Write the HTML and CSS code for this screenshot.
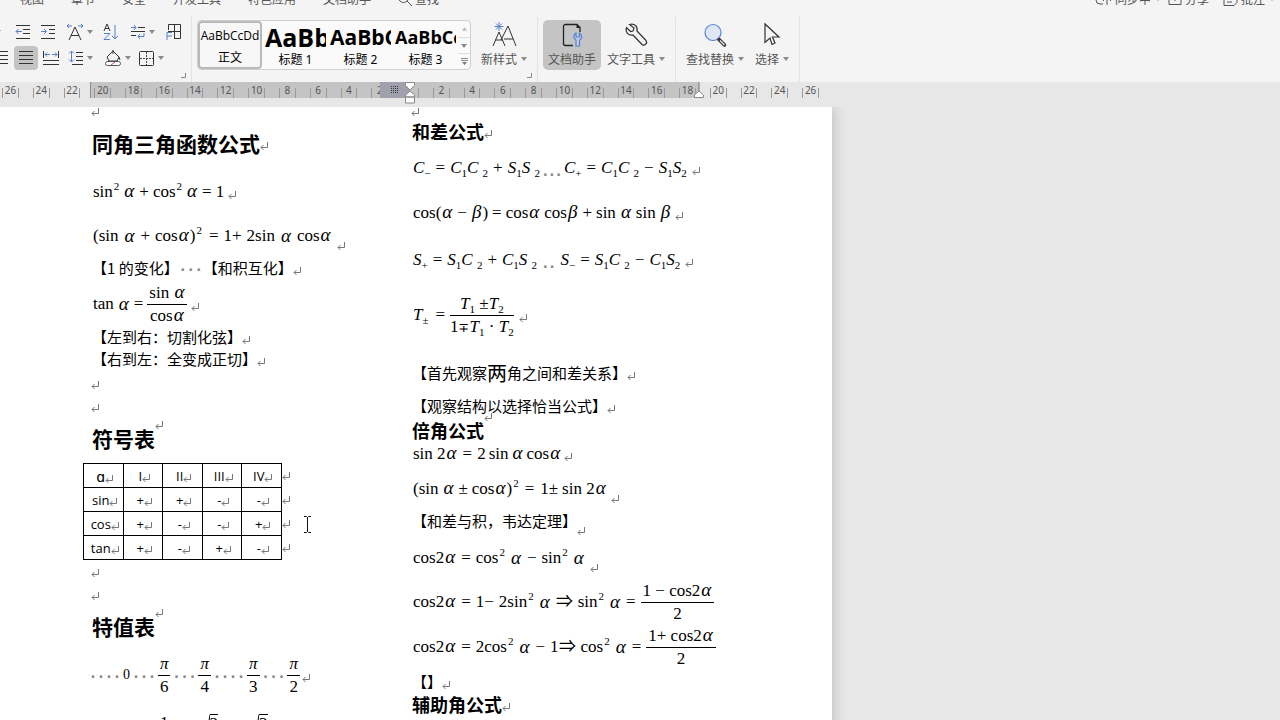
FILE: index.html
```html
<!DOCTYPE html>
<html lang="zh-CN">
<head>
<meta charset="utf-8">
<title>三角函数公式</title>
<link rel="stylesheet" href="styles.css">
</head>
<body>
<svg class="defs" aria-hidden="true">
  <symbol id="ret" viewBox="0 0 8 8"><path d="M7.5 0v5.500H1M3.500 3L1 5.500 3.500 8" fill="none" stroke="#777"/></symbol>
  <symbol id="tri" viewBox="0 0 6 4"><path d="M0 0h6L3 4z" fill="#8a8a8a"/></symbol>
</svg>
<div class="app">
  <nav class="menu">
    <button>视图</button><button>章节</button><button>安全</button><button>开发工具</button><button>特色应用</button><button>文档助手</button>
    <button class="find"><svg width="14" height="14" viewBox="0 0 14 14"><circle cx="5.500" cy="5.500" r="5"/><path d="M9 9l5 5"/></svg>查找</button>
    <div class="menu-right">
      <button class="sync"><svg width="17" height="12" viewBox="0 0 17 12"><path d="M8 11H5a4 4 0 010-8M12 1v11M8 8l4-4 4 4"/></svg>同步中<svg class="dot" width="6" height="4"><use href="#tri"/></svg></button>
      <button><svg width="14" height="12" viewBox="0 0 14 12"><path d="M1 2v9.500h12V2M7 8V0"/></svg>分享</button>
      <button><svg width="15" height="13" viewBox="0 0 15 13"><path d="M1 0v12.500h10l3-3V0M4 6h7M4 9h5"/></svg>批注<svg class="dot" width="6" height="4"><use href="#tri"/></svg></button>
    </div>
  </nav>

  <div class="ribbon">
    <section class="group para">
      <div class="tools first">
        <button aria-label="编号"><svg width="6" height="4"><use href="#tri"/></svg></button>
        <button aria-label="减少缩进"><svg width="16" height="16" viewBox="0 0 16 16"><path class="k" d="M1 1.500h14M8 5.500h7M8 9.500h7M1 14.500h14"/><path class="b" d="M7 7.500H1M3.500 5L1 7.500 3.500 10"/></svg></button>
        <button aria-label="增加缩进"><svg width="16" height="16" viewBox="0 0 16 16"><path class="k" d="M1 1.500h14M9 5.500h6M9 9.500h6M1 14.500h14"/><path class="b" d="M1 7.500h5M4 5l2.500 2.500L4 10"/></svg></button>
        <button class="wide" aria-label="字符缩放"><svg width="18" height="18" viewBox="0 0 18 18"><path class="k" d="M3 17L9 4l6 13M5 12.500h8"/><path class="b" d="M1 3h5M3 1L1 3l2 2M12 3h5M15 1l2 2-2 2"/></svg><svg width="6" height="4"><use href="#tri"/></svg></button>
        <button aria-label="排序"><svg width="18" height="18" viewBox="0 0 18 18"><path class="k" d="M2 8l3-7 3 7M3 5.500h4"/><path class="b" d="M2 10.500h6L2 16.500h6M13 2v14M10 13l3 3 3-3"/></svg></button>
        <button class="wide" aria-label="制表位"><svg width="16" height="16" viewBox="0 0 16 16"><path class="k" d="M8 3.500h7M1 7.500h14M1 11.500h5"/><path class="b" d="M1 3.500h5M4 1l2 2.500L4 6M14 9v3.500H8M10 10l-2 2.500 2 2.500"/></svg><svg width="6" height="4"><use href="#tri"/></svg></button>
        <button aria-label="框架"><svg width="18" height="18" viewBox="0 0 18 18"><path class="k" d="M3.500 7V1.500h12v14H9M9.500 2v14M3 8.500h13"/><path class="b" d="M2 17V9.500h5M2 13h5"/></svg></button>
      </div>
      <div class="tools second">
        <button aria-label="右对齐"><svg width="16" height="16" viewBox="0 0 16 16"><path class="k" d="M1 1.500h14M5 5.500h10M1 9.500h14M5 13.500h10"/></svg></button>
        <button class="on" aria-label="两端对齐"><svg width="16" height="16" viewBox="0 0 16 16"><path class="k" d="M1 1.500h14M1 5.500h14M1 9.500h14M1 13.500h14"/></svg></button>
        <button aria-label="分散对齐"><svg width="18" height="16" viewBox="0 0 18 16"><path class="k" d="M1.500 1v7M16.500 1v7M1 10.500h16M1 14.500h16"/><path class="b" d="M3 4.500h5M5 2.500l-2 2 2 2M10 4.500h5M13 2.500l2 2-2 2"/></svg></button>
        <button class="wide" aria-label="行距"><svg width="16" height="16" viewBox="0 0 16 16"><path class="k" d="M8 2.500h7M8 6.500h7M8 10.500h7M4 14.500h11"/><path class="b" d="M3.500 1v11M1 3.500L3.500 1 6 3.500M1 9.500L3.500 12 6 9.500"/></svg><svg width="6" height="4"><use href="#tri"/></svg></button>
        <button class="wide fill" aria-label="底纹"><svg width="18" height="18" viewBox="0 0 18 18"><path class="k" d="M3 8l6-6 6 6-2 4H5zM9 1v4M15 8l1 3"/><rect x="1.500" y="12.500" width="15" height="4" rx="2" fill="#fff" stroke="#555"/><path d="M7 16l4-3" stroke="#d44a5a"/></svg><svg width="6" height="4"><use href="#tri"/></svg></button>
        <button class="wide" aria-label="边框"><svg width="17" height="17" viewBox="0 0 17 17"><rect class="k" x="1.500" y="1.500" width="14" height="14" rx="1"/><path d="M8.500 2v13M2 8.500h13" stroke="#444" stroke-dasharray="2 1"/></svg><svg width="6" height="4"><use href="#tri"/></svg></button>
      </div>
      <svg class="launch" width="5" height="5"><path d="M4.500 0v4.500H0" fill="none" stroke="#888"/></svg>
    </section>

    <section class="group styles">
      <div class="gallery">
        <button class="style on"><span class="s0">AaBbCcDd</span><b>正文</b></button>
        <button class="style"><span class="s1">AaBb</span><b>标题 1</b></button>
        <button class="style"><span class="s2">AaBbC</span><b>标题 2</b></button>
        <button class="style"><span class="s3">AaBbCc</span><b>标题 3</b></button>
        <div class="spin">
          <button aria-label="上"><svg class="up" width="5" height="4" viewBox="0 0 6 4"><path d="M0 4h6L3 0z" fill="#bbb"/></svg></button>
          <button aria-label="下"><svg width="6" height="4"><use href="#tri"/></svg></button>
          <button aria-label="更多"><svg width="7" height="8" viewBox="0 0 7 8"><path d="M0 .5h7M0 2.500h7" stroke="#888"/><path d="M1 4h5L3.500 7z" fill="#777"/></svg></button>
        </div>
      </div>
      <button class="big new"><svg width="26" height="26" viewBox="0 0 26 26"><path class="k" d="M2 24l6-14 6 14M4 18h8M10 18l7-14 8 20M13 17h9"/><path class="b" d="M8 0v9M3.500 4.500h9M5 1.500l6 6M11 1.500l-6 6"/></svg><span>新样式<svg width="6" height="4"><use href="#tri"/></svg></span></button>
      <svg class="launch" width="5" height="5"><path d="M4.500 0v4.500H0" fill="none" stroke="#888"/></svg>
    </section>

    <section class="group mid">
      <button class="big on"><svg width="26" height="26" viewBox="0 0 26 26"><path d="M14 23.500H6.500a2 2 0 01-2-2v-17a2 2 0 012-2H18l3 3V10" fill="none" stroke="#222" stroke-width="1.300"/><path d="M17.500 2v4h4z" fill="#222"/><path class="b w" d="M17 11v4h3.500v-4c3 2 3 5.500 0 7v6H17v-6c-3-1.500-3-5 0-7z"/></svg><span>文档助手</span></button>
      <button class="big"><svg width="26" height="26" viewBox="0 0 26 26"><path class="k w" d="M6.500 2.500c5-1.500 8.500 2 7.500 6.500l9 9.500c2 2.500-1.500 6-4 4L10 13C5.500 14 2 10 3.500 5.500l4 4 2.500-.500 1-3z"/></svg><span>文字工具<svg width="6" height="4"><use href="#tri"/></svg></span></button>
    </section>
    <section class="group last">
      <button class="big"><svg width="26" height="26" viewBox="0 0 26 26"><circle cx="11" cy="10.500" r="8" fill="#dfe6f6" stroke="#5b84d6" stroke-width="1.200"/><path d="M17 17.500l5.500 5.500" stroke="#333" stroke-width="3.500" stroke-linecap="round"/><path d="M18 18.500l4.500 4.500" stroke="#eee" stroke-width="1.300"/></svg><span>查找替换<svg width="6" height="4"><use href="#tri"/></svg></span></button>
      <button class="big"><svg width="26" height="26" viewBox="0 0 26 26"><path class="k w" d="M6 2v18.500l5-4.500 2 6.500 3-1.500-2.500-6H20z"/></svg><span>选择<svg width="6" height="4"><use href="#tri"/></svg></span></button>
    </section>
  </div>

  <div class="ruler">
    <div class="scale">
      <span>26</span><span>24</span><span>22</span><span>20</span><span>18</span><span>16</span><span>14</span><span>12</span><span>10</span><span>8</span><span>6</span><span>4</span><span>2</span><span></span><span>2</span><span>4</span><span>6</span><span>8</span><span>10</span><span>12</span><span>14</span><span>16</span><span>18</span><span>20</span><span>22</span><span>24</span><span>26</span>
    </div>
    <div class="gutter"><svg width="8" height="8" viewBox="0 0 8 8"><path d="M0 .5h8M0 2.500h8M0 4.500h8M0 6.500h8" stroke="#333" stroke-dasharray="1 1"/></svg></div>
    <svg class="marker indent" width="10" height="22" viewBox="0 0 10 22"><path d="M.5.500h9v3L5 8 .5 3.500zM5 9l4.500 4v2h-9v-2zM.500 15h9v6h-9z" fill="#fff" stroke="#888"/></svg>
    <svg class="marker right" width="10" height="16" viewBox="0 0 10 16"><path d="M5 0v9" stroke="#777"/><path d="M5 9l4.500 4v2.500h-9V13z" fill="#fff" stroke="#888"/></svg>
  </div>

  <main class="desk">
    <article class="page">
      <div class="col left">
        <p class="h11 mark"><svg><use href="#ret"/></svg></p>
        <h1 class="h52">同角三角函数公式<svg><use href="#ret"/></svg></h1>
        <p class="eq h43"><span>sin<sup>2</sup></span><i class="g">α</i><span>+</span><span>cos<sup>2</sup></span><i class="g">α</i><span>=</span><span>1</span><svg><use href="#ret"/></svg></p>
        <p class="eq wide h46 low"><span>(sin</span><i class="g">α</i><span>+</span><span>cos<i class="g">α</i>)<sup>2</sup></span><span class="l">=</span><span>1+</span><span>2sin</span><i class="g">α</i><span>cos<i class="g">α</i></span><svg><use href="#ret"/></svg></p>
        <p class="h20">【1 的变化】<em>···</em>【和积互化】<svg><use href="#ret"/></svg></p>
        <p class="eq h48"><span>tan</span><i class="g">α</i><span>=</span><span class="frac"><span>sin <i class="g">α</i></span><span>cos<i class="g">α</i></span></span><svg><use href="#ret"/></svg></p>
        <p class="h20">【左到右：切割化弦】<svg><use href="#ret"/></svg></p>
        <p class="h24">【右到左：全变成正切】<svg><use href="#ret"/></svg></p>
        <p class="h24 mark"><svg><use href="#ret"/></svg></p>
        <p class="h24 mark"><svg><use href="#ret"/></svg></p>
        <h1 class="h43 high">符号表<svg><use href="#ret"/></svg></h1>
        <table>
          <tr><td class="var">ɑ<svg><use href="#ret"/></svg></td><td>I<svg><use href="#ret"/></svg></td><td>II<svg><use href="#ret"/></svg></td><td>III<svg><use href="#ret"/></svg></td><td>IV<svg><use href="#ret"/></svg></td><td class="end"><svg><use href="#ret"/></svg></td></tr>
          <tr><td>sin<svg><use href="#ret"/></svg></td><td>+<svg><use href="#ret"/></svg></td><td>+<svg><use href="#ret"/></svg></td><td>-<svg><use href="#ret"/></svg></td><td>-<svg><use href="#ret"/></svg></td><td class="end"><svg><use href="#ret"/></svg></td></tr>
          <tr><td>cos<svg><use href="#ret"/></svg></td><td>+<svg><use href="#ret"/></svg></td><td>-<svg><use href="#ret"/></svg></td><td>-<svg><use href="#ret"/></svg></td><td>+<svg><use href="#ret"/></svg></td><td class="end"><svg><use href="#ret"/></svg></td></tr>
          <tr><td>tan<svg><use href="#ret"/></svg></td><td>+<svg><use href="#ret"/></svg></td><td>-<svg><use href="#ret"/></svg></td><td>+<svg><use href="#ret"/></svg></td><td>-<svg><use href="#ret"/></svg></td><td class="end"><svg><use href="#ret"/></svg></td></tr>
        </table>
        <p class="h24 mark"><svg><use href="#ret"/></svg></p>
        <p class="h24 mark"><svg><use href="#ret"/></svg></p>
        <h1 class="h43 high">特值表<svg><use href="#ret"/></svg></h1>
        <p class="eq h52 values"><em>····</em><b>0</b><em>···</em><span class="frac"><i>π</i><span>6</span></span><em>···</em><span class="frac"><i>π</i><span>4</span></span><em>····</em><span class="frac"><i>π</i><span>3</span></span><em>···</em><span class="frac"><i>π</i><span>2</span></span><svg><use href="#ret"/></svg></p>
        <p class="eq h43 roots"><span>1</span><span class="root"><svg viewBox="0 0 6 18"><path d="M0 12l2-1 1.500 6L6 .5" stroke="#000"/></svg><span>2</span></span><span class="root"><svg viewBox="0 0 6 18"><path d="M0 12l2-1 1.500 6L6 .5" stroke="#000"/></svg><span>3</span></span></p>
      </div>

      <div class="col">
        <p class="h11 mark"><svg><use href="#ret"/></svg></p>
        <h2 class="h28">和差公式<svg><use href="#ret"/></svg></h2>
        <p class="eq wide h43"><span><i>C</i><sub>−</sub></span><span>=</span><span><i>C</i><sub>1</sub><i>C</i> <sub>2</sub></span><span>+</span><span><i>S</i><sub>1</sub><i>S</i> <sub>2</sub></span><em class="base dots3">...</em><span><i>C</i><sub>+</sub></span><span>=</span><span><i>C</i><sub>1</sub><i>C</i> <sub>2</sub></span><span>−</span><span><i>S</i><sub>1</sub><i>S</i><sub>2</sub></span><svg><use href="#ret"/></svg></p>
        <p class="eq h47"><span>cos(<i class="g">α</i></span><span>−</span><span><i class="g">β</i>)</span><span>=</span><span>cos<i class="g">α</i></span><span>cos<i class="g">β</i></span><span>+</span><span>sin</span><i class="g">α</i><span>sin</span><i class="g">β</i><svg><use href="#ret"/></svg></p>
        <p class="eq wide h47"><span><i>S</i><sub>+</sub></span><span>=</span><span><i>S</i><sub>1</sub><i>C</i> <sub>2</sub></span><span>+</span><span><i>C</i><sub>1</sub><i>S</i> <sub>2</sub></span><em class="base">..</em><span><i>S</i><sub>−</sub></span><span>=</span><span><i>S</i><sub>1</sub><i>C</i> <sub>2</sub></span><span>−</span><span><i>C</i><sub>1</sub><i>S</i><sub>2</sub></span><svg><use href="#ret"/></svg></p>
        <p class="eq wide h64"><span><i>T</i><sub>±</sub></span><span class="l">=</span><span class="frac"><span><i>T</i><sub>1</sub> ±<i>T</i><sub>2</sub></span><span>1<span class="op">∓</span><i>T</i><sub>1</sub> · <i>T</i><sub>2</sub></span></span><svg><use href="#ret"/></svg></p>
        <p class="h28 gap">【首先观察<big>两</big>角之间和差关系】<svg><use href="#ret"/></svg></p>
        <p class="h28 gap-s">【观察结构以选择恰当公式】<svg><use href="#ret"/></svg></p>
        <h2 class="h20 high">倍角公式<svg><use href="#ret"/></svg></h2>
        <p class="eq tight h24"><span>sin 2<i class="g">α</i></span><span class="l">=</span><span class="l">2</span><span>sin</span><i class="g">α</i><span>cos<i class="g">α</i></span><svg><use href="#ret"/></svg></p>
        <p class="eq h47 low"><span>(sin</span><i class="g">α</i><span>±</span><span>cos<i class="g">α</i>)<sup>2</sup></span><span class="l">=</span><span class="l">1±</span><span>sin 2<i class="g">α</i></span><svg><use href="#ret"/></svg></p>
        <p class="h20 low">【和差与积，韦达定理】<svg><use href="#ret"/></svg></p>
        <p class="eq wide h50 low"><span>cos2<i class="g">α</i></span><span>=</span><span>cos<sup>2</sup></span><i class="g">α</i><span>−</span><span>sin<sup>2</sup></span><i class="g">α</i><svg><use href="#ret"/></svg></p>
        <p class="eq wide h38"><span>cos2<i class="g">α</i></span><span>=</span><span>1−</span><span>2sin<sup>2</sup></span><i class="g">α</i><span>⇒</span><span>sin<sup>2</sup></span><i class="g">α</i><span>=</span><span class="frac"><span>1 − cos2<i class="g">α</i></span><span>2</span></span></p>
        <p class="eq wide h52"><span>cos2<i class="g">α</i></span><span>=</span><span>2cos<sup>2</sup></span><i class="g">α</i><span>−</span><span>1⇒</span><span>cos<sup>2</sup></span><i class="g">α</i><span>=</span><span class="frac"><span>1+ cos2<i class="g">α</i></span><span>2</span></span></p>
        <p class="h20">【】<svg><use href="#ret"/></svg></p>
        <h2 class="h24">辅助角公式<svg><use href="#ret"/></svg></h2>
      </div>
      <svg class="ibeam" width="7" height="17" viewBox="0 0 7 17"><path d="M0 .5h2.500l1 1 1-1H7M3.500 1v15M0 16.500h2.500l1-1 1 1H7" fill="none" stroke="#111"/></svg>
    </article>
  </main>
</div>
</body>
</html>
```
FILE: styles.css
```css
* { box-sizing: border-box; }
body {
  margin: 0;
  font-family: "Noto Sans", "Noto Sans CJK SC", sans-serif;
  color: #000;
  background: #e7e7e7;
}
.defs { position: absolute; width: 0; height: 0; }
.app { height: 100vh; overflow: hidden; display: flex; flex-direction: column; }
button { border: 0; padding: 0; background: none; font: inherit; color: inherit; display: flex; align-items: center; justify-content: center; }
svg { flex: none; fill: none; }
.k { stroke: #333; fill: none; }
.b { stroke: #5580d0; fill: none; }
.w { fill: #f4f4f4; stroke-width: 1.2; }

.menu { flex: none; display: flex; gap: 27px; height: 20px; margin-top: -11px; padding-left: 20px; background: #f4f4f4; font: 12px/20px "Noto Sans CJK SC", sans-serif; color: #555; }
.menu svg { stroke: #555; margin-right: 3px; }
.menu .dot { stroke: none; margin: 0 0 0 4px; }
.menu-right { display: flex; gap: 14px; margin-left: auto; padding-right: 5px; }
.menu .sync { margin-right: -7px; }

.ribbon { flex: none; display: flex; height: 73px; padding-top: 8px; background: #f4f4f4; }
.group { position: relative; display: flex; align-items: flex-start; gap: 5px; padding: 3px 5px 0; border-right: 1px solid #e2e2e2; }
.group.mid { padding-right: 9px; }
.group.last { gap: 9px; padding: 3px 9px 0; }
.group.para { flex-direction: column; gap: 2px; padding: 3px 4px 0 0; }
.launch { position: absolute; right: 5px; bottom: 4px; }
.tools { display: flex; align-items: center; height: 24px; margin-left: -14px; }
.tools button { width: 24px; height: 24px; margin-right: 1px; border-radius: 4px; }
.tools .wide { width: 34px; gap: 3px; margin-right: 2px; }
.tools .on { background: #c4c4c4; }
.tools.second { margin-left: -11px; }
.tools.second .wide { width: 32px; }
.tools .fill { margin-left: 3px; }
.tools.first .wide { width: 36px; }

.gallery { display: flex; border: 1px solid #cfcfcf; border-radius: 4px; height: 50px; background: #fafafa; }
.styles { padding-right: 9px; gap: 9px; }
.style { width: 65px; height: 48px; flex-direction: column; overflow: hidden; justify-content: flex-end; }
.style.on { border: 2px solid #b9b9b9; border-radius: 4px; margin-right: 1px; width: 64px; padding-bottom: 0; background: #f7f7f7; }
.style span { display: flex; align-items: center; height: 26px; line-height: 26px; width: 61px; margin-bottom: 1px; overflow: hidden; white-space: nowrap; font-family: "Open Sans", sans-serif; }
.style b { font-weight: 400; font-size: 12px; line-height: 18px; }
.s0 { font-size: 12px; justify-content: center; }
.s1 { font-size: 25px; font-weight: 700; }
.s2 { font-size: 21px; font-weight: 700; }
.s3 { font-size: 18px; font-weight: 700; }
.spin { display: grid; grid-template-rows: 1fr 1fr 1fr; width: 12px; }
.spin button + button { border-top: 1px solid #e0e0e0; }

.big { flex-direction: column; justify-content: flex-start; height: 50px; padding: 2px 1px 0; gap: 2px; border-radius: 5px; font: 12px/18px "Noto Sans CJK SC", sans-serif; color: #555; }
.big span { display: flex; align-items: center; gap: 4px; }
.big.on { background: #c4c4c4; width: 58px; }
.big.on .w { fill: #c4d0e6; }

.ruler { position: relative; flex: none; height: 25px; background: linear-gradient(to right, #e7e7e7 90px, #8c8c8c 90px, #8c8c8c 91px, #c4c4c4 91px, #c4c4c4 699px, #e7e7e7 699px) top / 100% 16px no-repeat #e7e7e7; }
.scale { display: grid; grid-template-columns: repeat(27, 1fr); width: 831px; margin-left: -5px; font: 10px/16px "Noto Sans", sans-serif; color: #555; text-align: center; }
.scale span { height: 16px; margin: 0 7px; background: linear-gradient(#999, #999) left bottom / 1px 10px no-repeat, linear-gradient(#999, #999) right bottom / 1px 10px no-repeat; }
.gutter { position: absolute; left: 380px; top: 0; width: 30px; height: 16px; background: #a1a1ad; display: grid; place-items: center; }
.marker { position: absolute; top: 0; }
.indent { left: 405px; }
.right { left: 694px; }

.desk { flex: 1; min-height: 0; overflow: hidden; clip-path: inset(0); }
.page { position: relative; display: grid; grid-template-columns: 320px 1fr; width: 65%; min-height: 100%; padding-left: 92px; background: #fff; box-shadow: 0 0 14px #b4b4b4; }

p, h1, h2 { margin: 0; padding-bottom: 3px; display: flex; align-items: center; white-space: pre; font-weight: 400; font-size: 15px; line-height: 20px; font-family: "Noto Sans CJK SC", sans-serif; }
h1 { font-size: 21px; font-weight: 700; }
h2 { font-size: 18px; font-weight: 700; }
.col svg { width: 8px; height: 8px; margin-top: 6px; }
.col .mark { padding: 0; margin-left: -1px; }
.col .mark svg { margin: 2px 0 0; }
.col .h11 svg { margin-top: -2px; }
.col .low svg { margin-top: 20px; }
.col .high svg { margin: -26px 0 0; }
p em { font-style: normal; color: #888; font-family: "Liberation Sans", sans-serif; font-size: 24px; }
.h11 { height: 11px; }
.h20 { height: 21px; }
.h24 { height: 23px; }
.h28 { height: 28px; }
.h38 { height: 38px; }
.h43 { height: 43px; }
.h46 { height: 46px; }
.h47 { height: 47px; }
.h48 { height: 48px; }
.h50 { height: 50px; }
.h52 { height: 52px; }
.h64 { height: 64px; }
.gap { margin-top: 13px; }
.gap-s { margin-top: 5px; }
big { font-size: 20px; }

.eq { gap: 4px; padding: 0 0 0 1px; font: 17px/20px "Liberation Serif", serif; }
.eq.tight { gap: 3px; }
.eq.wide { gap: 5px; }
.eq .l { margin-left: 2px; }
.g { font-size: 19px; line-height: 0; margin: 0 1px; }
.eq > .g { line-height: 20px; padding-bottom: 1px; }
.eq sup, .eq sub { font-size: 11px; line-height: 0; }
.eq sup { vertical-align: 7px; margin-left: 1px; }
.eq sub { vertical-align: -4px; }
.dots3 { margin: 0 -3px; }
.op { font-family: "DejaVu Sans", sans-serif; font-size: 13px; line-height: 0; }
.frac { display: flex; flex-direction: column; align-items: center; line-height: 22px; }
.frac > :first-child { border-bottom: 1px solid #000; padding: 0 2px; align-self: stretch; text-align: center; }
.values { gap: 2px; padding-left: 0; }
.values em:first-child { margin-left: -3px; }
.values b { font-size: 14px; font-weight: 400; }
.roots { padding-left: 68px; gap: 35px; }
.root { display: flex; height: 18px; line-height: 18px; }
.root span { border-top: 1px solid #000; }
.col .root svg { width: 6px; height: 18px; margin: 0; }

table { border-collapse: collapse; margin: 2px 0 0 -9px; font: 13px/16px "Open Sans", sans-serif; table-layout: fixed; width: 206px; }
td { height: 24px; padding: 0 0 0 3px; border: 1px solid #000; text-align: center; }
.col td svg { margin: 0; vertical-align: -1px; }
td.var { font-size: 15px; }
td.end { border-width: 0 0 0 1px; width: 8px; padding: 0; }
td.end svg { vertical-align: 1px; }
.ibeam { position: absolute; left: 304px; top: 409px; }
```
